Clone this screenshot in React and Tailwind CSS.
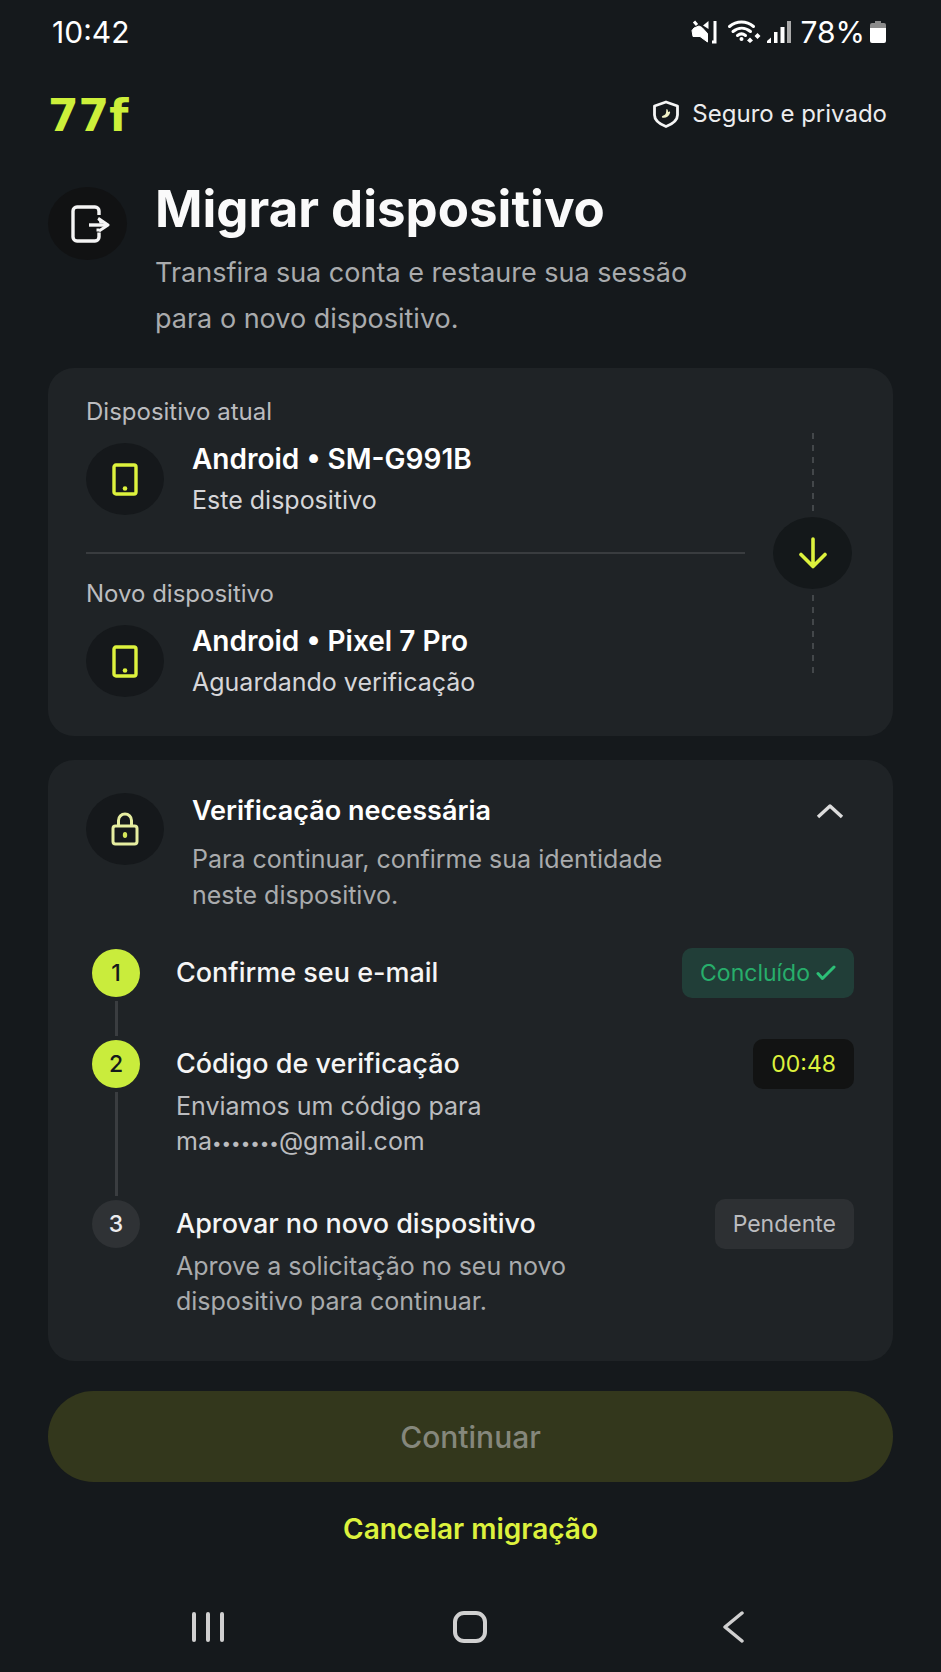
import React, { useState } from 'react';

function StatusBar() {
  return (
    <div className="flex h-16 items-center justify-between pl-[52px] pr-[54px] text-[30px] leading-9 text-white">
      <span>10:42</span>
      <div className="flex items-center">
        {/* Muted speaker */}
        <svg viewBox="0 0 26 24" className="h-6 w-[26px]" fill="none">
          <path d="M1 10.500 3 8l5-2 3 1.500 5.500 6V22L9 16.500H2z" fill="#fff" stroke="#fff" strokeLinejoin="round" />
          <path d="M3 1.500 6 5M24 1v21h-3" stroke="#fff" strokeWidth="3" />
          <path d="M17.500 1v8L12 5.500z" fill="#fff" />
        </svg>
        <svg viewBox="0 0 34 24" className="ml-[10px] h-6 w-[34px]" fill="none" stroke="#fff" strokeWidth="3" strokeLinecap="round">
          <path d="M2.500 6.500c7-6 17-6 24 0" />
          <path d="M6 11.500c5.500-4.500 12-4.500 17.500 0" />
          <path d="M10.500 15.500c2.500-2 5.500-2 8 0" />
          <circle cx="14.500" cy="19" r="2" fill="#fff" stroke="none" />
          <path d="m23 17.500 3 3-3 2.500-3-2.500zM30.500 13l3 3-3 3-3-3z" fill="#fff" stroke="none" />
        </svg>
        <svg viewBox="0 0 24 22" className="ml-[6px] h-[22px] w-6" fill="#fff">
          <path d="M0 22v-2l4-3.500V22z" />
          <rect x="7" y="11" width="3.500" height="11" />
          <rect x="13.500" y="6" width="4" height="16" />
          <rect x="20" y="0" width="4" height="22" fill="#aaa" />
        </svg>
        <span className="ml-[9px]">78%</span>
        <svg viewBox="0 0 18 24" className="ml-1 h-6 w-[18px]">
          <path d="M6 1h6v2h3a2 2 0 0 1 2 2v3H1V5a2 2 0 0 1 2-2h3z" fill="#8b8b8b" />
          <path d="M1 8h16v13a2 2 0 0 1-2 2H3a2 2 0 0 1-2-2z" fill="#fff" />
        </svg>
      </div>
    </div>
  );
}

function PhoneIcon() {
  return (
    <svg viewBox="0 0 26 33" className="h-[33px] w-[26px]" fill="none">
      <rect x="2" y="2" width="22" height="29" rx="2" stroke="#ddf23d" strokeWidth="3.400" />
      <circle cx="13" cy="25.500" r="2.300" fill="#ddf23d" />
    </svg>
  );
}

function Device({ label, name, status }) {
  return (
    <div>
      <p className="text-[24px] leading-9 text-[#bbbcbf]">{label}</p>
      <div className="mt-[10px] flex items-center gap-7">
        <div className="flex h-[72px] w-[78px] shrink-0 items-center justify-center rounded-[50%] bg-[#15181b]">
          <PhoneIcon />
        </div>
        <div>
          <h2 className="text-[28px] font-semibold leading-[38px] text-white">{name}</h2>
          <p className="mt-1 text-[25px] leading-9 text-[#d6d6d9]">{status}</p>
        </div>
      </div>
    </div>
  );
}

function DashedLine() {
  return (
    <svg viewBox="0 0 2 78" className="h-[78px] w-[2px]">
      <path d="M1 0v78" stroke="#43474a" strokeWidth="2" strokeDasharray="6 6" />
    </svg>
  );
}

const steps = [
  {
    title: 'Confirme seu e-mail',
    circle: 'bg-[#c9ec3c] text-[#15191c]',
    badge: 'bg-[#213e38] text-[#27ae6b]',
    badgeText: 'Concluído',
    done: true,
    space: 'pb-[43px]',
  },
  {
    title: 'Código de verificação',
    text: (
      <>
        Enviamos um código para
        <br />
        ma<span className="align-middle text-[17px] leading-none">•••••••</span>@gmail.com
      </>
    ),
    textColor: 'text-[#bbbcbf]',
    circle: 'bg-[#c9ec3c] text-[#15191c]',
    badge: 'bg-[#121313] text-[#ddf23d]',
    badgeText: '00:48',
    space: 'pb-[41px]',
  },
  {
    title: 'Aprovar no novo dispositivo',
    text: (
      <>
        Aprove a solicitação no seu novo
        <br />
        dispositivo para continuar.
      </>
    ),
    textColor: 'text-[#a9abad]',
    circle: 'bg-[#2f3235] text-[#ececee]',
    badge: 'bg-[#2d3033] text-[#bbbcbf]',
    badgeText: 'Pendente',
    space: '',
  },
];

function Step({ step, number, last }) {
  return (
    <li className="flex">
      <div className="flex w-12 shrink-0 flex-col items-center">
        <span className={`flex h-12 w-12 items-center justify-center rounded-full text-[23px] font-medium leading-none ${step.circle}`}>
          {number}
        </span>
        {!last && <span className="my-1 w-[3px] flex-1 bg-[#3a3d40]" />}
      </div>
      <div className={`ml-9 flex-1 ${step.space}`}>
        <div className="flex h-12 items-center justify-between">
          <h3 className="text-[27px] font-medium leading-9 text-[#f5f5f5]">{step.title}</h3>
          <span className={`flex h-[50px] shrink-0 items-center gap-[6px] rounded-[10px] px-[18px] text-[23px] leading-9 ${step.badge}`}>
            {step.badgeText}
            {step.done && (
              <svg viewBox="0 0 20 16" className="h-4 w-5" fill="none">
                <path d="m2 8.500 4.500 5L18 2" stroke="#2cc077" strokeWidth="3" strokeLinecap="round" strokeLinejoin="round" />
              </svg>
            )}
          </span>
        </div>
        {step.text && <p className={`mt-px text-[25px] leading-[35px] ${step.textColor}`}>{step.text}</p>}
      </div>
    </li>
  );
}

export default function App() {
  const [open, setOpen] = useState(true);

  return (
    <div className="flex min-h-screen flex-col bg-[#15191c] font-['Inter','Liberation_Sans',sans-serif]">
      <StatusBar />

      <header className="flex h-[100px] items-center justify-between pl-12 pr-[54px]">
        <span className="pt-1 font-['DejaVu_Sans',sans-serif] text-[44px] font-bold leading-none text-[#cdf03a]">77f</span>
        <div className="flex items-center gap-3 text-[24px] leading-9 text-[#ececee]">
          <svg viewBox="0 0 28 28" className="h-7 w-7" fill="none">
            <path d="M14 2 25.500 6v9c0 5.500-5 9-11.500 11.500C7.500 24 2.500 20.500 2.500 15V6z" stroke="#f5f5f5" strokeWidth="2.800" strokeLinejoin="round" />
            <path d="M14.500 9c1 0 1.500 1 1.500 3 1.500-1 2.500-.5 2 1-1 3.500-4.500 5.500-8 4.500-.8-1.200 1-1.800 2.500-2.500 2-1.200 1.500-3.500 2-6z" fill="#f2f2c8" />
          </svg>
          <span>Seguro e privado</span>
        </div>
      </header>

      <main className="flex flex-col px-12 pt-[17px]">
        <section className="flex gap-7">
          <div className="mt-[6px] flex h-[73px] w-[79px] shrink-0 items-center justify-center rounded-[50%] bg-[#111213]">
            <svg viewBox="-4 0 44 38" className="h-[38px] w-11" fill="none" stroke="#f5f5f5" strokeWidth="3.400" strokeLinejoin="round">
              <path d="M29 10V6a4 4 0 0 0-4-4H7a4 4 0 0 0-4 4v26a4 4 0 0 0 4 4h18a4 4 0 0 0 4-4v-4.500" />
              <path d="M19 20h18" />
              <path d="M28.500 13.500 38 20l-9 6M28 13.500c2 1 3 3 3 5" strokeWidth="3" />
              <path d="M28 23.500v3" strokeWidth="3" />
            </svg>
          </div>
          <div>
            <h1 className="text-[51px] font-bold leading-[56px] text-[#fafafa]">Migrar dispositivo</h1>
            <p className="mt-[13px] text-[27px] leading-[46px] text-[#a9abad]">
              Transfira sua conta e restaure sua sessão
              <br />
              para o novo dispositivo.
            </p>
          </div>
        </section>

        <section className="mt-[26px] flex items-center gap-7 rounded-[26px] bg-[#1f2326] pb-9 pl-[38px] pr-[41px] pt-[26px]">
          <div className="flex-1">
            <Device label="Dispositivo atual" name="Android • SM-G991B" status="Este dispositivo" />
            <hr className="mb-[22px] mt-[34px] border-t-2 border-[#393c3f]" />
            <Device label="Novo dispositivo" name="Android • Pixel 7 Pro" status="Aguardando verificação" />
          </div>
          <div className="flex flex-col items-center gap-[6px] pt-3">
            <DashedLine />
            <div className="flex h-[72px] w-[79px] items-center justify-center rounded-[50%] bg-[#14181a]">
              <svg viewBox="0 0 28 32" className="h-8 w-7" fill="none">
                <path d="M14 2v27M2 17.500 14 29.500l12-12" stroke="#ddf23d" strokeWidth="3.600" strokeLinecap="round" strokeLinejoin="round" />
              </svg>
            </div>
            <DashedLine />
          </div>
        </section>

        <section className="mt-6 rounded-[26px] bg-[#1f2326] pb-[42px] pl-[38px] pr-[39px] pt-[33px]">
          <div className="flex items-start">
            <div className="flex h-[72px] w-[78px] shrink-0 items-center justify-center rounded-[50%] bg-[#15181b]">
              <svg viewBox="0 0 28 34" className="h-[34px] w-7" fill="none" stroke="#e6eda0" strokeWidth="3">
                <rect x="2" y="14" width="24" height="18" rx="2.500" />
                <path d="M7.500 14V8.500a6.500 6.500 0 0 1 13 0V14" />
                <ellipse cx="14" cy="23" rx="2.200" ry="3" fill="#d5e65a" stroke="none" />
              </svg>
            </div>
            <div className="ml-7 flex-1">
              <h2 className="text-[27px] font-semibold leading-9 text-white">Verificação necessária</h2>
              <p className="mt-3 text-[25px] leading-9 text-[#a9abad]">
                Para continuar, confirme sua identidade
                <br />
                neste dispositivo.
              </p>
            </div>
            <button
              type="button"
              aria-label="Mostrar etapas"
              aria-expanded={open}
              onClick={() => setOpen(!open)}
              className="flex h-9 w-12 items-center justify-center"
            >
              <svg viewBox="0 0 28 16" className="h-4 w-7" fill="none">
                <path d="M2 14 14 3l12 11" stroke="#dcdcdc" strokeWidth="3.400" strokeLinejoin="round" />
              </svg>
            </button>
          </div>

          {open && (
            <ol className="mt-9 pl-[6px]">
              {steps.map((step, i) => (
                <Step key={step.title} step={step} number={i + 1} last={i === steps.length - 1} />
              ))}
            </ol>
          )}
        </section>

        <button
          type="button"
          disabled
          className="mt-[30px] h-[91px] rounded-full bg-[#33371c] text-[30px] font-medium leading-9 text-[#85877c]"
        >
          Continuar
        </button>
        <button type="button" className="mt-7 self-center text-[28px] font-semibold leading-[38px] text-[#ddf23d]">
          Cancelar migração
        </button>
      </main>

      {/* Android navigation */}
      <nav className="mt-auto grid h-[90px] grid-cols-3 px-[77px]">
        <button type="button" aria-label="Recentes" className="flex items-center justify-center">
          <svg viewBox="0 0 34 32" className="h-8 w-[34px]" fill="none" stroke="#d0d0d0" strokeWidth="4" strokeLinecap="round">
            <path d="M3 3v26M17 3v26M31 3v26" />
          </svg>
        </button>
        <button type="button" aria-label="Início" className="flex items-center justify-center">
          <svg viewBox="0 0 36 34" className="h-[34px] w-9" fill="none" stroke="#d0d0d0" strokeWidth="4">
            <rect x="3" y="3" width="30" height="28" rx="9" />
          </svg>
        </button>
        <button type="button" aria-label="Voltar" className="flex items-center justify-center">
          <svg viewBox="0 0 22 34" className="h-[34px] w-[22px]" fill="none" stroke="#d0d0d0" strokeWidth="3.500" strokeLinecap="round" strokeLinejoin="round">
            <path d="M20 3 3 17l17 14" />
          </svg>
        </button>
      </nav>
    </div>
  );
}
